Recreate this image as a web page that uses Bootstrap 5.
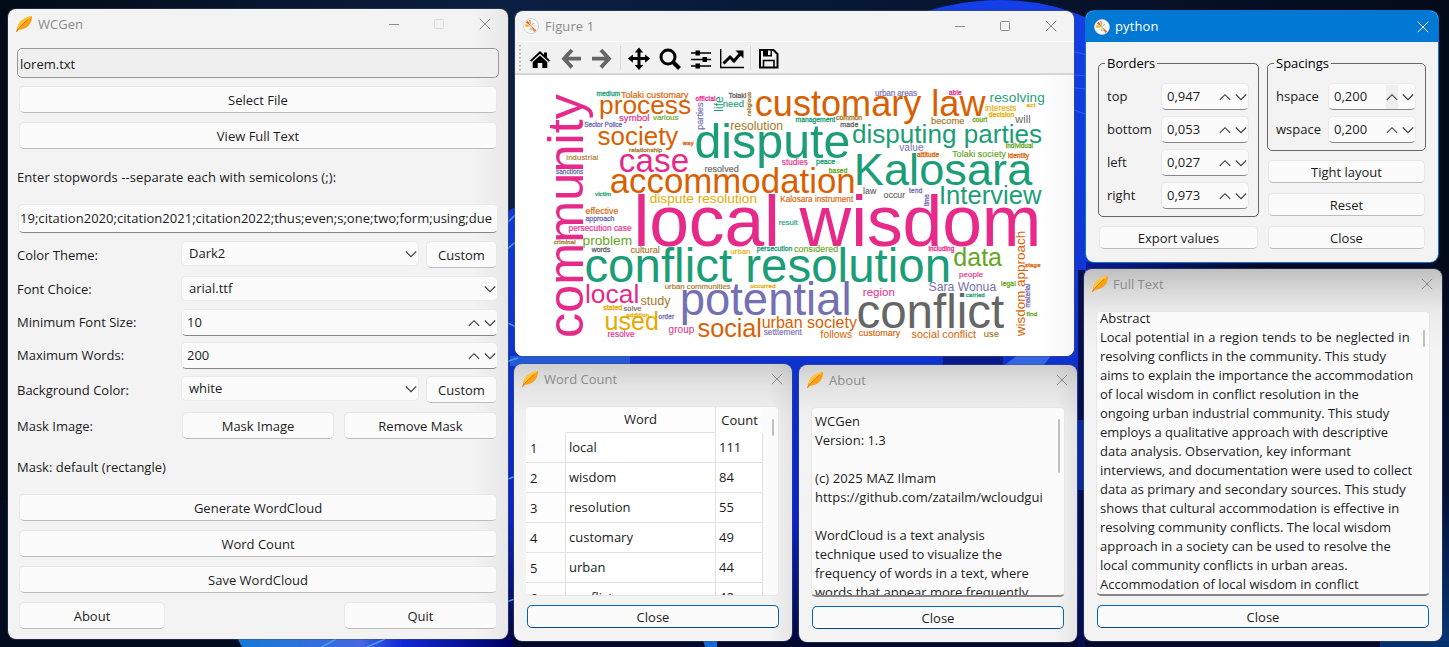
<!DOCTYPE html>
<html lang="en">
<head>
<meta charset="utf-8">
<meta name="viewport" content="width=device-width, initial-scale=1">
<title>WCGen</title>
<link href="https://cdn.jsdelivr.net/npm/bootstrap@5.3.0/dist/css/bootstrap.min.css" rel="stylesheet">
<style>
body{width:1449px;height:647px;overflow:hidden;position:relative;background:#030b1c;font-family:"Open Sans","Noto Sans",sans-serif;font-size:13px;line-height:19px;color:#1b1b1b}
.wallpaper{position:absolute;left:0;top:0}
.win{position:absolute;background:#f3f3f3;border-radius:8px;overflow:hidden;box-shadow:0 0 0 1px rgba(70,80,100,.45)}
.win-main{left:8px;top:9px;width:500px;height:630px;background:linear-gradient(90deg,#f3f3f3 93%,#e8e8e8)}
.win-fig{left:515px;top:11px;width:559px;height:345px;background:#f3f3f3}
.win-py{left:1086px;top:11px;width:352px;height:251px;box-shadow:0 0 0 1px #0078d4}
.win-count{left:514px;top:364px;width:278px;height:277px}
.win-about{left:799px;top:365px;width:278px;height:277px}
.win-full{left:1084px;top:269px;width:358px;height:372px}
.shade{background:linear-gradient(90deg,rgba(0,0,0,0) 92%,rgba(0,0,0,.06)),linear-gradient(#cfcfcf,#e3e3e3 22px,#f0f0f0 50px,#f3f3f3 80px)}
.win-full.shade{background:linear-gradient(#bfbfbf,#d9d9d9 22px,#ebebeb 44px,#f3f3f3 80px)}
.tbar{height:30px;padding-left:8px;color:#8b8b8b}
.tbar svg{flex:none;display:block}
.tbar .ttl{margin-left:6px}
.wb{height:27px;padding:0;border:1px solid #e7e7e7;border-bottom-color:#bcbcbc;border-radius:5px;background:#fbfbfb;font-size:13px;line-height:26px;color:#1b1b1b;font-variant-ligatures:none}
.wb.short{height:23px;line-height:23px}
.wb.focus{height:23px;line-height:22px;border-color:#0067c0;border-bottom-color:#004a8c}
.fld{height:25px;border:1px solid #e9e9e9;border-radius:5px;background:#fbfbfb;padding-left:7px;padding-right:1px}
.fld.spin{height:27px;border-bottom-color:#868686;padding-left:5px}
.lab{width:164px;flex:none}
.pane{background:#fbfbfb;border:1px solid #e6e6e6;border-radius:5px;overflow:hidden;position:relative;white-space:nowrap}
.pane.ul{border-bottom:2px solid #868686}
.sb{position:absolute;width:2px;border-radius:1px;background:#c0c0c0}
.toolbar{height:34px;border-top:1px solid #fff;border-bottom:2px solid #d5d5d5;background:#f1f1f1}
.grp{border:1px solid #666;border-radius:5px;position:relative}
.grp .cap{position:absolute;top:-10px;left:6px;padding:0 2px;background:#f3f3f3;color:#000}
.grp .rw{height:27px;margin-bottom:6px}
.grp .fld{width:88px;margin-left:auto}
.wtab{margin:0;border-collapse:separate;border-spacing:0;table-layout:fixed;width:236px;font-size:13px;color:#1b1b1b}
.wtab td,.wtab th{height:30px;padding:0 3px;font-weight:400;border:0 solid #e2e2e2;background:#fff;line-height:29px}
.wtab tr>:first-child{border-width:0 1px 1px 0;background:#fdfdfd;padding:2px 4px 0;line-height:27px}
.wtab td{border-width:0 1px 1px 0}
.wtab thead th{height:26px;background:#fdfdfd;line-height:25px;padding:0;text-align:center}
.wtab thead tr>:first-child{border-width:0;padding:0}
.wtab thead th:nth-child(2){border-width:0 1px 1px 0}
.cloud{display:block;font-family:"Liberation Sans",Arial,sans-serif}
.g{fill:#1b9e77;stroke:#1b9e77}.o{fill:#d95f02;stroke:#d95f02}.p{fill:#7570b3;stroke:#7570b3}.k{fill:#e7298a;stroke:#e7298a}.l{fill:#66a61e;stroke:#66a61e}.y{fill:#e6ab02;stroke:#e6ab02}.b{fill:#a6761d;stroke:#a6761d}.x{fill:#666;stroke:#666}
.cloud text{stroke-width:0}
.cloud text[font-size^="5."],.cloud text[font-size="6"],.cloud text[font-size^="6."],.cloud text[font-size="7"]{stroke-width:.3}
.cloud text[font-size^="7."],.cloud text[font-size="8"],.cloud text[font-size^="8."],.cloud text[font-size^="9."]{stroke-width:.15}
</style>
</head>
<body>
<!-- desktop wallpaper -->
<svg class="wallpaper" width="1449" height="647" aria-hidden="true">
<defs>
<linearGradient id="sky" x1="0" x2="1"><stop offset="0" stop-color="#020a18"/><stop offset=".35" stop-color="#0b1f42"/><stop offset=".62" stop-color="#071733"/><stop offset="1" stop-color="#030a1a"/></linearGradient>
<linearGradient id="bl" x1="0" y1="0" x2="0" y2="1"><stop offset="0" stop-color="#143fe6"/><stop offset=".5" stop-color="#0f35d0"/><stop offset=".8" stop-color="#0a24c4"/><stop offset="1" stop-color="#01053a"/></linearGradient>
<linearGradient id="bt" x1="0" x2="1"><stop offset="0" stop-color="#1478d8"/><stop offset=".45" stop-color="#4468e0"/><stop offset=".6" stop-color="#1028d8"/><stop offset="1" stop-color="#000060"/></linearGradient>
<linearGradient id="rb" x1="0" y1="0" x2="0" y2="1"><stop offset="0" stop-color="#030a1a"/><stop offset=".6" stop-color="#031238"/><stop offset="1" stop-color="#083478"/></linearGradient>
<linearGradient id="mid" x1="0" x2="1"><stop offset="0" stop-color="#0a1a90"/><stop offset=".5" stop-color="#030a28"/></linearGradient>
</defs>
<rect width="1449" height="647" fill="url(#sky)"/>
<rect y="500" width="240" height="147" fill="#030c1e"/>
<path d="M500 218Q515 200 560 200L900 20Q1005-20 1092 20L1150 250 1240 280 1090 647H500z" fill="url(#bl)"/>
<path d="M1086 262h352v8h-352z" fill="url(#mid)"/>
<path d="M237 638H512V647H242z" fill="url(#bt)"/>
<path d="M514 640H1449V647H514z" fill="#02092c"/>
<path d="M703 640h14v7h-12z" fill="#1868d8"/>
<path d="M1078 270h7v377h-7z" fill="#050f50"/>
<path d="M1078 420h7v70h-7z" fill="#0a2a9c"/>
<path d="M1437 260h12v387h-12z" fill="url(#rb)"/>
<path d="M1380 641h69v6h-69z" fill="#04306e"/>
<path d="M943 356h60v10h-60z" fill="#0a1a88"/>
<path d="M510 356h120v10h-120z" fill="#2358d8"/>
<path d="M1003 366l14-10h34l-8 10z" fill="#3466e4"/>
<g fill="none" stroke="#4aa0e8" stroke-width="1.5"><path d="M506 224l12-12M506 250l12-10M506 322l12 6M506 362l12-4M506 480l12-5M506 602l12-4M320 648l16-9M365 648l20-9"/></g>
<path d="M1074 52l14 3M1074 75l14 1M1074 88l14 1M1074 110l14 5" stroke="#2c62ee" fill="none"/>
</svg>

<svg class="d-none">
<symbol id="quill" viewBox="0 0 16 16"><path d="M.3 15.800C1 13 1.200 10.500 2.600 8 5.200 4 10 .8 16 .1c.3 4-1.600 8.600-5 11-2.400 1.800-5.200 2.700-8.200 2.800L.9 16z" fill="#f9a01a"/><path d="M2.600 8C5.200 4 10 .8 16 .1 11.500 4 7 7.500 2.300 13.500 1.800 12 1.700 10 2.600 8z" fill="#ffc92e"/><path d="M.3 15.800C4 10.500 8 6.500 12.500 3" stroke="#ea7610" fill="none"/></symbol>
<symbol id="mpl" viewBox="0 0 16 16"><circle cx="8" cy="8" r="7.500" fill="#fff" stroke="#c4ccd0" stroke-width=".8"/><circle cx="8" cy="8" r="4" fill="none" stroke="#c9d3d8" stroke-width=".5"/><path d="M1.500 8h13M8 1.500v13" stroke="#c4ccd4" stroke-width=".4"/><path d="M8 8L2.200 5.800 2.400 9.300z" fill="#f7b718"/><path d="M8 8L2.900 4.500 4.600 2.600z" fill="#e8541e"/><path d="M8 8L5.800 1.900 7.600 1.700z" fill="#f58a3a"/><path d="M8 8l5.200 4.300-1.900 1.800z" fill="#f26522"/><path d="M8 8l2-3.300 1 .8z" fill="#6ac35a"/><path d="M8 8l-.9 3.500 1.700.2z" fill="#8bc34a"/></symbol>
<symbol id="x" viewBox="0 0 12 12"><path d="M.8.800l10.400 10.400M11.200.800L.8 11.200" stroke="currentColor" fill="none"/></symbol>
<symbol id="mn" viewBox="0 0 12 12"><path d="M1 6.500h10" stroke="currentColor" fill="none"/></symbol>
<symbol id="mx" viewBox="0 0 12 12"><rect x="1.500" y="1.500" width="9" height="9" rx="1" stroke="currentColor" fill="none"/></symbol>
<symbol id="dn" viewBox="0 0 12 12"><path d="M.8 3.500L6 8.700l5.200-5.200" stroke="#3c3c3c" stroke-width="1.100" fill="none"/></symbol>
<symbol id="up" viewBox="0 0 12 12"><path d="M.8 8.900L6 3.700l5.200 5.200" stroke="#3c3c3c" stroke-width="1.100" fill="none"/></symbol>
</svg>

<section class="win win-main">
 <header class="tbar d-flex align-items-center"><svg width="16" height="16"><use href="#quill"/></svg><span class="ttl">WCGen</span>
  <svg class="ms-auto" width="12" height="12"><use href="#mn"/></svg><svg width="12" height="12" style="margin-left:33px;color:#dcdcdc"><use href="#mx"/></svg><svg width="12" height="12" style="margin:0 17px 0 34px"><use href="#x"/></svg></header>
 <div class="d-flex align-items-center" style="height:30px;margin:9px 9px 0;border:1px solid #999;border-radius:5px;background:#efefef;padding:3px 2px 0">lorem.txt</div>
 <div class="d-grid" style="margin:8px 11px 0;gap:9px"><button class="btn wb">Select File</button><button class="btn wb">View Full Text</button></div>
 <div style="margin:19px 9px 0;letter-spacing:.07px">Enter stopwords --separate each with semicolons (;):</div>
 <div class="fld spin d-flex align-items-center text-nowrap overflow-hidden" style="margin:17px 10px 0;height:29px;padding-left:1px;letter-spacing:.03px">19;citation2020;citation2021;citation2022;thus;even;s;one;two;form;using;due</div>
 <div class="d-flex" style="margin:8px 11px 0 9px"><div class="lab" style="padding-top:5px">Color Theme:</div><div class="fld d-flex align-items-center flex-grow-1" style="margin-right:7px">Dark2<svg class="ms-auto" width="12" height="12"><use href="#dn"/></svg></div><button class="btn wb" style="width:71px">Custom</button></div>
 <div class="d-flex" style="margin:8px 10px 0 9px"><div class="lab pt-1">Font Choice:</div><div class="fld d-flex align-items-center flex-grow-1">arial.ttf<svg class="ms-auto" width="12" height="12"><use href="#dn"/></svg></div></div>
 <div class="d-flex" style="margin:8px 10px 0 9px"><div class="lab pt-1">Minimum Font Size:</div><div class="fld spin d-flex align-items-center flex-grow-1">10<svg class="ms-auto" width="12" height="12"><use href="#up"/></svg><svg class="ms-1" width="12" height="12"><use href="#dn"/></svg></div></div>
 <div class="d-flex" style="margin:6px 10px 0 9px"><div class="lab pt-1">Maximum Words:</div><div class="fld spin d-flex align-items-center flex-grow-1">200<svg class="ms-auto" width="12" height="12"><use href="#up"/></svg><svg class="ms-1" width="12" height="12"><use href="#dn"/></svg></div></div>
 <div class="d-flex" style="margin:7px 11px 0 9px"><div class="lab" style="padding-top:5px">Background Color:</div><div class="fld d-flex align-items-center flex-grow-1" style="margin-right:7px">white<svg class="ms-auto" width="12" height="12"><use href="#dn"/></svg></div><button class="btn wb" style="width:71px">Custom</button></div>
 <div class="d-flex" style="margin:9px 11px 0 9px"><div class="lab" style="width:165px;padding-top:5px">Mask Image:</div><button class="btn wb" style="width:152px;margin-right:10px">Mask Image</button><button class="btn wb flex-grow-1">Remove Mask</button></div>
 <div style="margin:19px 9px 0">Mask: default (rectangle)</div>
 <div class="d-grid" style="margin:17px 11px 0;gap:9px"><button class="btn wb">Generate WordCloud</button><button class="btn wb">Word Count</button><button class="btn wb">Save WordCloud</button></div>
 <div class="d-flex justify-content-between" style="margin:9px 11px 0"><button class="btn wb" style="width:146px">About</button><button class="btn wb" style="width:153px">Quit</button></div>
</section>

<section class="win win-fig">
 <header class="tbar d-flex align-items-center"><svg width="16" height="16"><use href="#mpl"/></svg><span class="ttl" style="letter-spacing:.1px">Figure 1</span>
  <svg class="ms-auto" width="12" height="12"><use href="#mn"/></svg><svg width="12" height="12" style="margin-left:33px"><use href="#mx"/></svg><svg width="12" height="12" style="margin:0 17px 0 34px"><use href="#x"/></svg></header>
 <div class="toolbar">
 <svg class="d-block" width="300" height="31" viewBox="515 42 300 31">
  <path d="M520 45v26" stroke="#b5b5b5" stroke-width="2" stroke-dasharray="1.500 2.500"/>
  <path d="M620.500 46v24M750.500 46v24" stroke="#dadada"/>
  <path d="M530 60.500L540 51l4 3.700V52.500h3v5l3 3-1.200 1.300L540 53.700l-8.800 8.100zM532.700 62l7.300-6.600 7.300 6.600v6h-5v-5h-4.600v5h-5z"/>
  <g fill="none" stroke="#666" stroke-width="3.800"><path d="M581 58.700h-16M572 50l-8 8.700 8 8.700M592 58.700h16M601 50l8 8.700-8 8.700"/></g>
  <path d="M639 47.500l4.200 5h-2.700v4.600h4.600v-2.700l5 4.200-5 4.200v-2.700h-4.600v4.800h2.700l-4.200 5-4.200-5h2.700v-4.800h-4.600v2.700l-5-4.200 5-4.200v2.700h4.600v-4.600h-2.700z"/>
  <circle cx="668" cy="57" r="7" fill="none" stroke="#000" stroke-width="3"/><path d="M673 62l6.500 6.500" stroke="#000" stroke-width="4"/>
  <path d="M691 53h20M691 59.500h20M691 66h20" stroke="#000" stroke-width="1.600"/><path d="M695.500 50.500h4.500v5h-4.500zM702.500 57h4.500v5h-4.500zM695.500 63.500h4.500v5h-4.500z"/>
  <path d="M720.700 49v18.500H744" fill="none" stroke="#000" stroke-width="1.400"/><path d="M723.500 63.500l6.500-6.500 4 4 7-8" fill="none" stroke="#000" stroke-width="3"/><path d="M735.500 50.500h8v8z"/>
  <path d="M760 50h13.500l4 4v13.500H760z" fill="none" stroke="#000" stroke-width="2"/><path d="M763 49h9v7.500h-9z"/><path d="M768 50.500h2.500v4.500H768z" fill="#fff"/><path d="M763.500 67v-6.500h10.500v6.500" fill="none" stroke="#000" stroke-width="1.600"/>
 </svg>
 </div>
 <svg class="cloud" width="559" height="281" viewBox="515 75 559 281">
 <defs><linearGradient id="cv"><stop offset=".94" stop-color="#fff"/><stop offset="1" stop-color="#f6f6f7"/></linearGradient></defs>
 <rect x="515" y="75" width="559" height="281" fill="url(#cv)"/>
 <g class="k">
 <text x="633.400" y="245.700" font-size="71.500" textLength="408">local wisdom</text>
 <text transform="translate(583 338) rotate(-90)" font-size="50.300" textLength="244">community</text>
 <text x="618.700" y="172" font-size="33.200" textLength="70.500">case</text>
 <text x="585" y="303" font-size="26.400" textLength="54.300">local</text>
 <text x="619" y="121.300" font-size="9.600" textLength="30.500">symbol</text>
 <text x="695.500" y="101" font-size="6.500" textLength="20">official</text>
 <text x="949" y="94.700" font-size="6.300" textLength="12.500">able</text>
 <text x="781.800" y="165.300" font-size="8.200" textLength="26">studies</text>
 <text x="568.500" y="231" font-size="8.300" textLength="63">persecution case</text>
 <text x="928.500" y="250.700" font-size="6.300" textLength="25.700">including</text>
 <text x="959" y="277.300" font-size="8" textLength="24.200">people</text>
 <text x="862.800" y="296.300" font-size="11.500" textLength="32">region</text>
 <text x="607.500" y="337.300" font-size="8.200" textLength="27">resolve</text>
 <text x="668.500" y="332.700" font-size="10" textLength="25.900">group</text>
 </g>
 <g class="o">
 <text x="599.100" y="113.700" font-size="26.300" textLength="92">process</text>
 <text x="621" y="97.600" font-size="9.300" textLength="67.500">Tolaki customary</text>
 <text x="597.600" y="144.700" font-size="25.900" textLength="80.700">society</text>
 <text x="682.700" y="144.700" font-size="6" textLength="11">way</text>
 <text x="609.700" y="192.700" font-size="34.800" textLength="246">accommodation</text>
 <text x="754.800" y="115.700" font-size="36.100" textLength="230.700">customary law</text>
 <text x="917" y="157" font-size="6.500" textLength="22">attitude</text>
 <text x="1008" y="157.700" font-size="6.300" textLength="21">identity</text>
 <text x="780.200" y="202" font-size="8.200" textLength="73">Kalosara instrument</text>
 <text x="585.500" y="214.300" font-size="8.900" textLength="33">effective</text>
 <text x="697.600" y="337.300" font-size="25.200" textLength="64.300">social</text>
 <text x="761.700" y="327.700" font-size="16" textLength="95.200">urban society</text>
 <text x="1025" y="266.700" font-size="6" textLength="15.500">stage</text>
 <text transform="translate(1024.700 336.200) rotate(-90)" font-size="13.400" textLength="105.300">wisdom approach</text>
 <text x="820.500" y="338.300" font-size="10.300" textLength="31.700">follows</text>
 <text x="858.700" y="335.700" font-size="9.000" textLength="41.500">customary</text>
 <text x="911.600" y="338.300" font-size="10.800" textLength="64.500">social conflict</text>
 </g>
 <g class="g">
 <text x="694.400" y="158" font-size="48.300" textLength="156">dispute</text>
 <text x="852" y="143.300" font-size="26.100" textLength="190">disputing parties</text>
 <text x="853.800" y="185" font-size="45.100" textLength="178.500">Kalosara</text>
 <text x="584.400" y="281.700" font-size="47.400" textLength="366.600">conflict resolution</text>
 <text x="938.900" y="204.300" font-size="25.600" textLength="102.600">Interview</text>
 <text x="596.500" y="95.700" font-size="6.500" textLength="23.500">medium</text>
 <text transform="translate(722.500 111.700) rotate(-90)" font-size="12" textLength="15.500">life</text>
 <text x="722.800" y="107" font-size="9.500" textLength="21.200">need</text>
 <text x="795.500" y="121.700" font-size="6.800" textLength="39.700">management</text>
 <text x="989.500" y="101.700" font-size="13.500" textLength="55.300">resolving</text>
 <text x="816" y="164.300" font-size="7" textLength="19.200">peace</text>
 <text x="595" y="196.300" font-size="6" textLength="16">victim</text>
 <text x="778.700" y="225.300" font-size="7.800" textLength="19">result</text>
 <text x="756.700" y="251.300" font-size="6.800" textLength="35.700">persecution</text>
 <text x="965.700" y="297.300" font-size="6" textLength="19">carried</text>
 </g>
 <g class="p">
 <text x="679.700" y="315.300" font-size="45.400" textLength="171.800">potential</text>
 <text x="584.200" y="127.300" font-size="6.500" textLength="38">Sector Police</text>
 <text x="556" y="173.700" font-size="6.300" textLength="27.200">sanctions</text>
 <text transform="translate(703.300 129.700) rotate(-90)" font-size="9.000" textLength="27.200">parties</text>
 <text x="875" y="96.300" font-size="8.200" textLength="42">urban areas</text>
 <text x="899.200" y="151" font-size="10.100" textLength="24.400">value</text>
 <text x="585.500" y="220.700" font-size="7" textLength="28.800">approach</text>
 <text x="658.500" y="318.700" font-size="6.300" textLength="15.700">order</text>
 <text x="763.700" y="335.300" font-size="8.200" textLength="38.200">settlement</text>
 <text x="909" y="192.700" font-size="6.400" textLength="13.300">tend</text>
 <text transform="translate(929.300 206.300) rotate(-90)" font-size="6.500" textLength="12.200">time</text>
 <text x="928.500" y="291.300" font-size="12.200" textLength="67.700">Sara Wonua</text>
 <text transform="translate(1030 307.500) rotate(-90)" font-size="6.600" textLength="23.800">material</text>
 </g>
 <g class="l">
 <text x="653" y="120" font-size="8" textLength="25.500">various</text>
 <text x="972.500" y="122.300" font-size="6.300" textLength="14.700">court</text>
 <text x="1005.700" y="147.700" font-size="6.300" textLength="27.200">individual</text>
 <text x="952.200" y="157.300" font-size="8.900" textLength="53.700">Tolaki society</text>
 <text x="828.800" y="172.700" font-size="6.500" textLength="18.500">based</text>
 <text x="582.500" y="245" font-size="13.700" textLength="49.600">problem</text>
 <text x="794" y="251.700" font-size="8.900" textLength="44.300">considered</text>
 <text x="953.300" y="266" font-size="25" textLength="48.700">data</text>
 <text x="1001" y="286" font-size="6.500" textLength="14.600">legal</text>
 <text x="1026.500" y="316" font-size="6.200" textLength="10.700">find</text>
 </g>
 <g class="y">
 <text x="985" y="111.300" font-size="8.200" textLength="31.300">interests</text>
 <text x="1026.500" y="107" font-size="6.200" textLength="9">act</text>
 <text x="988.800" y="117" font-size="7" textLength="25.500">decision</text>
 <text x="649.700" y="202.700" font-size="13.700" textLength="107.300">dispute resolution</text>
 <text x="730.400" y="254" font-size="7.700" textLength="20">urban</text>
 <text x="750.500" y="288.300" font-size="6" textLength="25">occurred</text>
 <text x="603.200" y="309.700" font-size="7" textLength="19">stated</text>
 <text x="626.200" y="316.500" font-size="6" textLength="23">addition</text>
 <text x="604.600" y="330.300" font-size="25.100" textLength="54.300">used</text>
 </g>
 <g class="b">
 <text x="730.200" y="129.700" font-size="12.100" textLength="52.700">resolution</text>
 <text x="629" y="151.700" font-size="6.200" textLength="33.200">relationship</text>
 <text x="566.300" y="159.700" font-size="7.600" textLength="32">industrial</text>
 <text transform="translate(750.500 116) rotate(-90)" font-size="6.200" textLength="24">religious</text>
 <text x="836" y="120.300" font-size="6.900" textLength="26.200">common</text>
 <text x="931" y="123.700" font-size="9.400" textLength="33.500">become</text>
 <text x="553.900" y="244" font-size="5.900" textLength="21.600">criminal</text>
 <text x="630.500" y="253.300" font-size="9.000" textLength="29.200">cultural</text>
 <text x="664.700" y="289" font-size="7.800" textLength="66">urban communities</text>
 <text x="640.500" y="304.700" font-size="12.500" textLength="30">study</text>
 <text x="983.700" y="337.300" font-size="9.400" textLength="15.500">use</text>
 </g>
 <g class="x">
 <text x="856.500" y="328" font-size="47.500" textLength="147.700">conflict</text>
 <text x="728.500" y="97.700" font-size="7" textLength="17.700">Tolaki</text>
 <text x="704.500" y="172" font-size="9.000" textLength="34.200">resolved</text>
 <text x="840.300" y="127.300" font-size="7" textLength="18">made</text>
 <text x="1015.200" y="123.300" font-size="10.900" textLength="15.500">will</text>
 <text x="863" y="193.700" font-size="8.700" textLength="13.200">law</text>
 <text x="883.500" y="198" font-size="8.800" textLength="21.700">occur</text>
 <text x="591.700" y="252" font-size="7" textLength="18.500">words</text>
 <text x="623.500" y="311" font-size="7.600" textLength="18">solve</text>
 </g>
 </svg>
</section>

<section class="win win-py">
 <header class="tbar d-flex align-items-center text-white" style="height:31px;background:#0078d4"><svg width="16" height="16"><use href="#mpl"/></svg><span class="ttl" style="margin-left:5px;letter-spacing:.1px">python</span><svg class="ms-auto" width="12" height="12" style="margin-right:9px"><use href="#x"/></svg></header>
 <div class="d-flex" style="margin:21px 12px 0 12px">
  <div style="width:161px;margin-right:8px">
   <div class="grp" style="height:154px;padding:19px 9px 0 8px"><span class="cap">Borders</span>
    <div class="rw d-flex align-items-center">top<div class="fld spin d-flex align-items-center">0,947<svg class="ms-auto" width="12" height="12"><use href="#up"/></svg><svg class="ms-1" width="12" height="12"><use href="#dn"/></svg></div></div>
    <div class="rw d-flex align-items-center">bottom<div class="fld spin d-flex align-items-center">0,053<svg class="ms-auto" width="12" height="12"><use href="#up"/></svg><svg class="ms-1" width="12" height="12"><use href="#dn"/></svg></div></div>
    <div class="rw d-flex align-items-center">left<div class="fld spin d-flex align-items-center">0,027<svg class="ms-auto" width="12" height="12"><use href="#up"/></svg><svg class="ms-1" width="12" height="12"><use href="#dn"/></svg></div></div>
    <div class="rw d-flex align-items-center">right<div class="fld spin d-flex align-items-center">0,973<svg class="ms-auto" width="12" height="12"><use href="#up"/></svg><svg class="ms-1" width="12" height="12"><use href="#dn"/></svg></div></div>
   </div>
   <div class="d-grid" style="margin:9px 1px 0"><button class="btn wb short">Export values</button></div>
  </div>
  <div style="width:159px">
   <div class="grp" style="height:88px;padding:19px 9px 0 8px"><span class="cap">Spacings</span>
    <div class="rw d-flex align-items-center">hspace<div class="fld spin d-flex align-items-center">0,200<span class="ms-auto d-flex align-items-center" style="height:24px;background:#efefef"><svg width="12" height="12"><use href="#up"/></svg></span><svg class="ms-1" width="12" height="12"><use href="#dn"/></svg></div></div>
    <div class="rw d-flex align-items-center">wspace<div class="fld spin d-flex align-items-center">0,200<svg class="ms-auto" width="12" height="12"><use href="#up"/></svg><svg class="ms-1" width="12" height="12"><use href="#dn"/></svg></div></div>
   </div>
   <div class="d-grid" style="margin:9px 1px 0;gap:10px"><button class="btn wb short">Tight layout</button><button class="btn wb short">Reset</button><button class="btn wb short">Close</button></div>
  </div>
 </div>
</section>

<section class="win win-count shade">
 <header class="tbar d-flex align-items-center"><svg width="16" height="16"><use href="#quill"/></svg><span class="ttl">Word Count</span><svg class="ms-auto" width="12" height="12" style="margin-right:9px"><use href="#x"/></svg></header>
 <div class="pane" style="margin:12px 13px 0 12px;height:190px;border-left:0">
  <table class="wtab"><colgroup><col style="width:40px"><col style="width:150px"><col style="width:47px"></colgroup>
  <thead><tr><th></th><th>Word</th><th>Count</th></tr></thead>
  <tbody><tr><th>1</th><td>local</td><td>111</td></tr><tr><th>2</th><td>wisdom</td><td>84</td></tr><tr><th>3</th><td>resolution</td><td>55</td></tr><tr><th>4</th><td>customary</td><td>49</td></tr><tr><th>5</th><td>urban</td><td>44</td></tr><tr><th>6</th><td>conflict</td><td>42</td></tr></tbody></table>
  <span class="sb" style="right:4px;top:12px;height:17px"></span>
 </div>
 <div class="d-grid" style="margin:9px 13px 0"><button class="btn wb focus">Close</button></div>
</section>

<section class="win win-about shade">
 <header class="tbar d-flex align-items-center"><svg width="16" height="16"><use href="#quill"/></svg><span class="ttl" style="letter-spacing:.1px">About</span><svg class="ms-auto" width="12" height="12" style="margin-right:9px"><use href="#x"/></svg></header>
 <div class="pane ul" style="margin:12px 12px 0 12px;height:190px;padding:4px 3px">WCGen<br>Version: 1.3<br><br><span style="letter-spacing:.1px">(c) 2025 MAZ Ilmam</span><br>https://github.com/zatailm/wcloudgui<br><br>WordCloud is a text analysis<br>technique used to visualize the<br>frequency of words in a text, where<br>words that appear more frequently
  <span class="sb" style="right:4px;top:11px;height:54px"></span>
 </div>
 <div class="d-grid" style="margin:9px 13px 0"><button class="btn wb focus">Close</button></div>
</section>

<section class="win win-full shade">
 <header class="tbar d-flex align-items-center"><svg width="16" height="16"><use href="#quill"/></svg><span class="ttl" style="margin-left:5px">Full Text</span><svg class="ms-auto" width="12" height="12" style="margin-right:9px"><use href="#x"/></svg></header>
 <div class="pane ul" style="margin:12px 12px 0 12px;height:285px;padding:0 3px"><div style="margin-top:-3px">Abstract<br><span style="word-spacing:.5px">Local potential in a region tends to be neglected in</span><br>resolving conflicts in the community. This study<br>aims to explain the importance the accommodation<br>of local wisdom in conflict resolution in the<br>ongoing urban industrial community. This study<br>employs a qualitative approach with descriptive<br>data analysis. Observation, key informant<br>interviews, and documentation were used to collect<br>data as primary and secondary sources. This study<br>shows that cultural accommodation is effective in<br>resolving community conflicts. The local wisdom<br>approach in a society can be used to resolve the<br>local community conflicts in urban areas.<br>Accommodation of local wisdom in conflict</div>
  <span class="sb" style="right:4px;top:18px;height:17px"></span>
 </div>
 <div class="d-grid" style="margin:9px 13px 0"><button class="btn wb focus">Close</button></div>
</section>
<script src="https://cdn.jsdelivr.net/npm/bootstrap@5.3.0/dist/js/bootstrap.bundle.min.js"></script>
</body>
</html>
